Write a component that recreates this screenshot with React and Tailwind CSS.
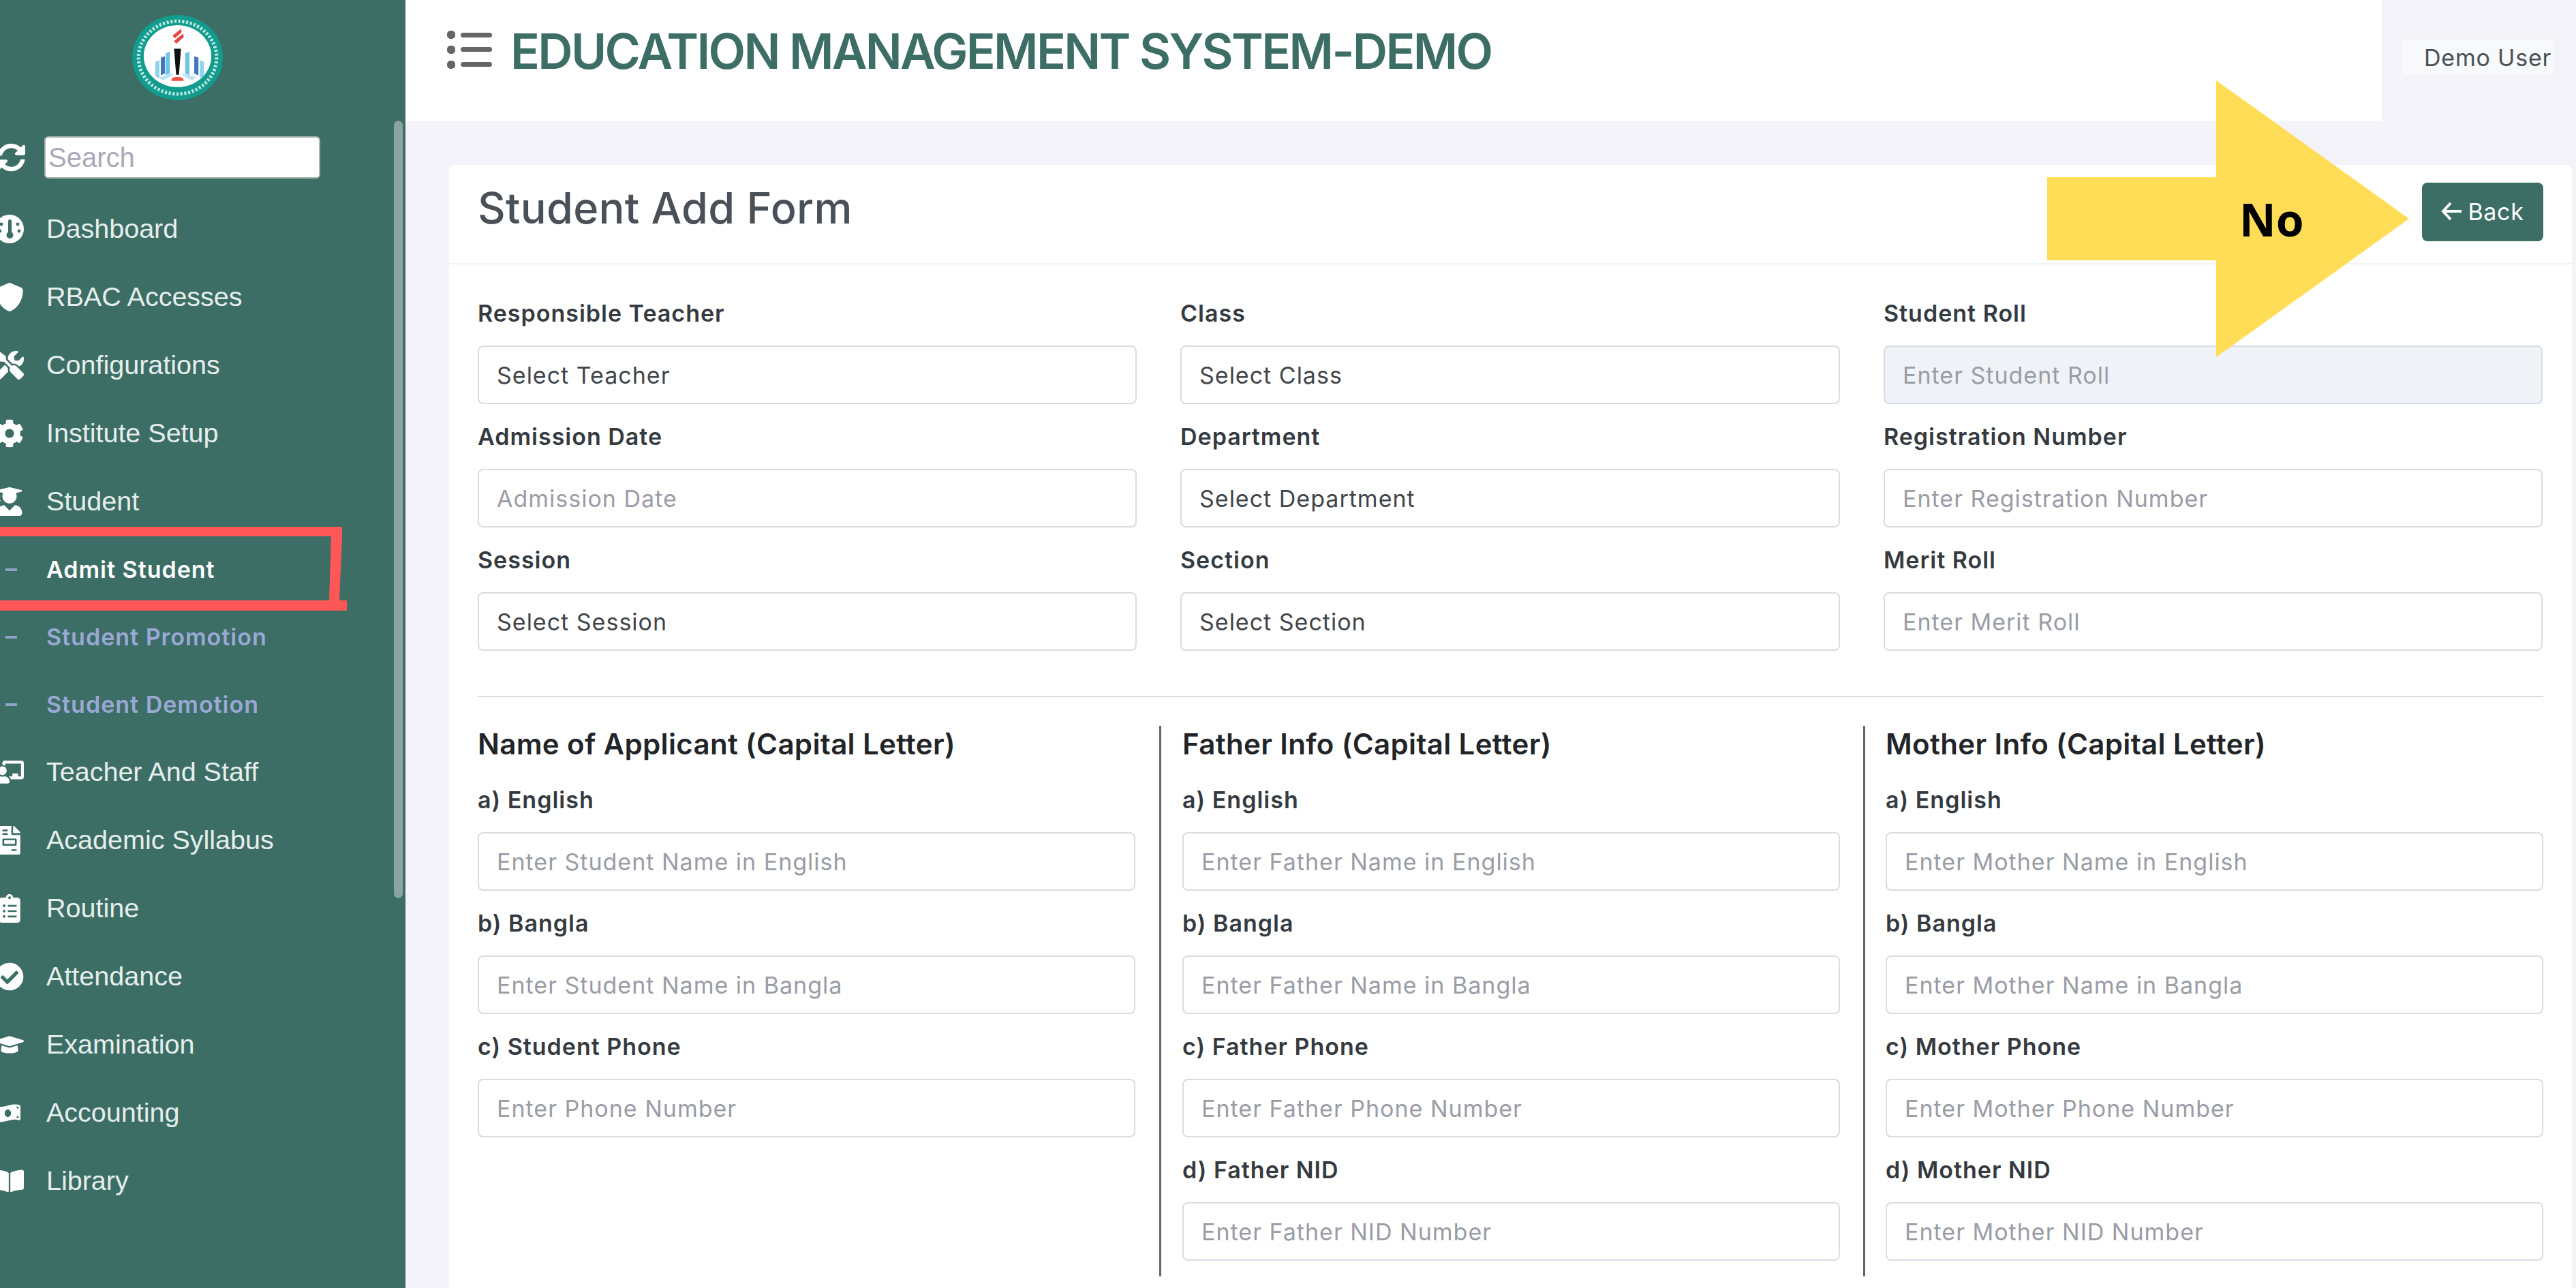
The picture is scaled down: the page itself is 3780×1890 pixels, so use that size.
import React from "react";
import {
  FaSyncAlt, FaTools, FaCog, FaUserGraduate, FaChalkboardTeacher,
  FaClipboardList, FaCheckCircle, FaGraduationCap, FaMoneyBillWave, FaBookOpen, FaFileInvoice,
} from "react-icons/fa";
import { FaShield } from "react-icons/fa6";

const Gauge = ({ className }) => (
  <svg viewBox="0 0 42 42" className={className}>
    <circle cx="21" cy="21" r="21" fill="currentColor" />
    <rect x="19" y="7" width="5" height="22" rx="2.5" fill="#3c6e66" />
    <circle cx="21.5" cy="30" r="5" fill="#3c6e66" />
    <circle cx="9" cy="14" r="2.4" fill="#3c6e66" />
    <circle cx="33" cy="14" r="2.4" fill="#3c6e66" />
    <circle cx="7" cy="24" r="2.4" fill="#3c6e66" />
    <circle cx="35" cy="24" r="2.4" fill="#3c6e66" />
  </svg>
);

const menuTop = [
  ["Dashboard", Gauge],
  ["RBAC Accesses", FaShield],
  ["Configurations", FaTools],
  ["Institute Setup", FaCog],
  ["Student", FaUserGraduate],
];
const menuBottom = [
  ["Teacher And Staff", FaChalkboardTeacher],
  ["Academic Syllabus", FaFileInvoice],
  ["Routine", FaClipboardList],
  ["Attendance", FaCheckCircle],
  ["Examination", FaGraduationCap],
  ["Accounting", FaMoneyBillWave, "h-[37px]"],
  ["Library", FaBookOpen],
];
const subs = [
  ["Admit Student", "text-white"],
  ["Student Promotion", "text-[#9aa8d6]"],
  ["Student Demotion", "text-[#9aa8d6]"],
];

function MenuItem({ label, Icon, size }) {
  return (
    <div className="flex h-[100px] items-center text-[#e6eeec]">
      <div className="w-[75px] shrink-0 -ml-[7px]">
        <Icon className={`${size || "h-[42px]"} w-auto text-white`} />
      </div>
      <span className="font-['Liberation_Sans',sans-serif] text-[39.5px] leading-none">{label}</span>
    </div>
  );
}

function Logo() {
  return (
    <svg viewBox="0 0 130 124" className="h-[125px] w-[133px]" preserveAspectRatio="none">
      <ellipse cx="65" cy="62" rx="65" ry="62" fill="#119c8e" />
      <ellipse cx="65" cy="62" rx="56" ry="53" fill="none" stroke="#bfe9e3" strokeWidth="5" strokeDasharray="3 2.6" />
      <ellipse cx="65" cy="60" rx="48.5" ry="45" fill="#ffffff" />
      <path d="M58 30l12-10 1 5-10 9zM60 38l13-11 1 5-11 10z" fill="#e8433f" />
      <path d="M60 49h10l-3 38h-4z" fill="#111" />
      <path d="M57 92q8-4 16 0l1 4H56z" fill="#ef5348" />
      <path d="M33 68l6-2v26l-6-3zM97 66l6 2v21l-6 3z" fill="#8fd3ee" />
      <path d="M41 62l6-2v25l-6 3zM89 60l6 2v26l-6-3z" fill="#4277b8" />
      <path d="M48 56l6-3v32l-6 3zM82 53l-6 3v29l6 3z" fill="#6fc2e8" />
      <path d="M38 91l20-6v3l-14 7zM92 91l-20-6v3l14 7z" fill="#b6e2f3" />
    </svg>
  );
}

function Field({ label, placeholder, options, disabled }) {
  return (
    <div className="flex flex-col">
      <div className="flex h-[95px] items-center font-['Inter',sans-serif] text-[34px] font-semibold tracking-[1px] text-[#343a40]">{label}</div>
      {options ? (
        <select className="h-[86px] w-full appearance-none rounded-[8px] border-2 border-[#d8dce3] bg-white px-[26px] font-['Inter',sans-serif] text-[34px] tracking-[1px] text-[#3f454b] outline-none">
          <option>{options}</option>
        </select>
      ) : (
        <input
          disabled={disabled}
          placeholder={placeholder}
          className={`h-[86px] w-full rounded-[8px] border-2 border-[#d8dce3] px-[26px] font-['Inter',sans-serif] text-[34px] tracking-[1px] outline-none placeholder:text-[#9a9ca6] ${disabled ? "bg-[#eff2f7]" : "bg-white"}`}
        />
      )}
    </div>
  );
}

function InfoColumn({ title, fields, className }) {
  return (
    <div className={`flex flex-col ${className}`}>
      <div className="flex h-[52px] items-center font-['Inter',sans-serif] text-[42px] font-semibold tracking-[0.35px] text-[#212529]">{title}</div>
      <div className="mt-[9px] flex flex-col">
        {fields.map((f) => (
          <Field key={f[0]} label={f[0]} placeholder={f[1]} />
        ))}
      </div>
    </div>
  );
}

export default function App() {
  return (
    <div className="relative flex h-[1890px] w-[3780px] overflow-hidden bg-white font-['Inter',sans-serif]">
      <aside className="relative flex w-[595px] shrink-0 flex-col bg-[#3c6e66]">
        <div className="flex h-[176px] shrink-0 pl-[194px] pt-[22px]">
          <Logo />
        </div>
        <div className="flex h-[110px] shrink-0 items-center">
          <div className="w-[72px] shrink-0 -ml-[7px]">
            <FaSyncAlt className="h-[42px] w-[47px] text-white" />
          </div>
          <input
            placeholder="Search"
            className="h-[62px] w-[405px] rounded-[6px] border-2 border-[#a9b5b2] bg-white px-[4px] font-['Liberation_Sans',sans-serif] text-[40px] outline-none placeholder:text-[#a9a9b8]"
          />
        </div>
        <nav className="flex flex-col">
          {menuTop.map(([l, I]) => <MenuItem key={l} label={l} Icon={I} />)}
          {subs.map(([l, c]) => (
            <div key={l} className="flex h-[99px] items-center">
              <div className="w-[68px] shrink-0 pl-[8px]">
                <div className="h-[4px] w-[17px] bg-[#8fa3c4]" />
              </div>
              <span className={`font-['Inter',sans-serif] text-[34px] font-semibold leading-none tracking-[1px] ${c}`}>{l}</span>
            </div>
          ))}
          {menuBottom.map(([l, I, s]) => <MenuItem key={l} label={l} Icon={I} size={s} />)}
        </nav>
        <div className="absolute left-[578px] top-[177px] h-[1141px] w-[13px] rounded-full bg-[#8aa5a0]" />
      </aside>

      <main className="flex min-w-0 flex-1 flex-col bg-[#f3f3f9]">
        <header className="flex h-[178px] shrink-0">
          <div className="flex w-[2900px] shrink-0 items-start gap-[27px] bg-white pl-[61px] pt-[45px]">
            <svg viewBox="0 0 66 56" className="h-[56px] w-[66px] text-[#666]">
              <g fill="currentColor">
                <rect x="0" y="0" width="12" height="12" rx="5" />
                <rect x="0" y="22" width="12" height="12" rx="5" />
                <rect x="0" y="44" width="12" height="12" rx="5" />
                <rect x="20" y="3" width="46" height="7" rx="3.5" />
                <rect x="20" y="24" width="46" height="7" rx="3.5" />
                <rect x="20" y="46" width="46" height="7" rx="3.5" />
              </g>
            </svg>
            <h1 className="pt-[2px] font-['Inter',sans-serif] text-[71px] font-semibold leading-[56px] tracking-[-2.65px] text-[#3c6e66]">EDUCATION MANAGEMENT SYSTEM-DEMO</h1>
          </div>
          <div className="flex-1 pl-[30px] pt-[58px]">
            <div className="flex h-[52px] w-[221px] items-center whitespace-nowrap bg-[#f8f9fa] pl-[32px] text-[34px] tracking-[0.8px] text-[#495057]">Demo User</div>
          </div>
        </header>

        <section className="ml-[64px] mr-[6px] mt-[64px] flex-1 rounded-t-[8px] bg-white">
          <div className="flex h-[146px] items-center justify-between border-b-2 border-[#eff2f7] pl-[42px] pr-[42px]">
            <h2 className="pb-[18px] font-['Inter',sans-serif] text-[63px] font-medium tracking-[0.3px] text-[#495057]">Student Add Form</h2>
            <button className="mb-[6px] flex h-[86px] w-[178px] items-center justify-center gap-[9px] rounded-[8px] bg-[#3c6e66] pb-[2px] text-[34px] tracking-[0.7px] text-white">
              <svg viewBox="0 0 30 28" className="h-[28px] w-[30px]" fill="none" stroke="currentColor" strokeWidth="4">
                <path d="M30 14H3M14 2L3 14l11 12" />
              </svg>
              Back
            </button>
          </div>

          <div className="px-[42px] pt-[24px]">
            <div className="grid grid-cols-[967px_968px_967px] gap-x-[64px]">
              <Field label="Responsible Teacher" options="Select Teacher" />
              <Field label="Class" options="Select Class" />
              <Field label="Student Roll" placeholder="Enter Student Roll" disabled />
              <Field label="Admission Date" placeholder="Admission Date" />
              <Field label="Department" options="Select Department" />
              <Field label="Registration Number" placeholder="Enter Registration Number" />
              <Field label="Session" options="Select Session" />
              <Field label="Section" options="Select Section" />
              <Field label="Merit Roll" placeholder="Enter Merit Roll" />
            </div>
            <div className="mt-[66px] h-[2px] bg-[#d9dadd]" />
            <div className="mt-[42px] flex h-[808px] items-stretch">
              <InfoColumn
                className="w-[965px] shrink-0"
                title="Name of Applicant (Capital Letter)"
                fields={[
                  ["a) English", "Enter Student Name in English"],
                  ["b) Bangla", "Enter Student Name in Bangla"],
                  ["c) Student Phone", "Enter Phone Number"],
                ]}
              />
              <div className="ml-[35px] w-[3px] shrink-0 bg-[#666]" />
              <InfoColumn
                className="ml-[31px] w-[965px] shrink-0"
                title="Father Info (Capital Letter)"
                fields={[
                  ["a) English", "Enter Father Name in English"],
                  ["b) Bangla", "Enter Father Name in Bangla"],
                  ["c) Father Phone", "Enter Father Phone Number"],
                  ["d) Father NID", "Enter Father NID Number"],
                ]}
              />
              <div className="ml-[34px] w-[3px] shrink-0 bg-[#666]" />
              <InfoColumn
                className="ml-[30px] w-[965px] shrink-0"
                title="Mother Info (Capital Letter)"
                fields={[
                  ["a) English", "Enter Mother Name in English"],
                  ["b) Bangla", "Enter Mother Name in Bangla"],
                  ["c) Mother Phone", "Enter Mother Phone Number"],
                  ["d) Mother NID", "Enter Mother NID Number"],
                ]}
              />
            </div>
          </div>
        </section>
      </main>

      {/* annotation red box */}
      <svg className="pointer-events-none absolute left-0 top-[773px] h-[123px] w-[510px]" viewBox="0 0 510 123">
        <path d="M0 0H502V14L498 108H509V123H0V108H483L486 14H0Z" fill="#ff5757" />
      </svg>

      {/* annotation arrow */}
      <div className="absolute left-[3004px] top-[118px] h-[406px] w-[531px]">
        <svg viewBox="0 0 531 406" className="h-full w-full">
          <path d="M0 142H248V0L531 203L248 406V264H0Z" fill="#ffdd57" />
        </svg>
        <span className="absolute left-[282px] top-[165px] font-['Open_Sans',sans-serif] text-[66px] font-bold leading-[76px] text-black">No</span>
      </div>
    </div>
  );
}
